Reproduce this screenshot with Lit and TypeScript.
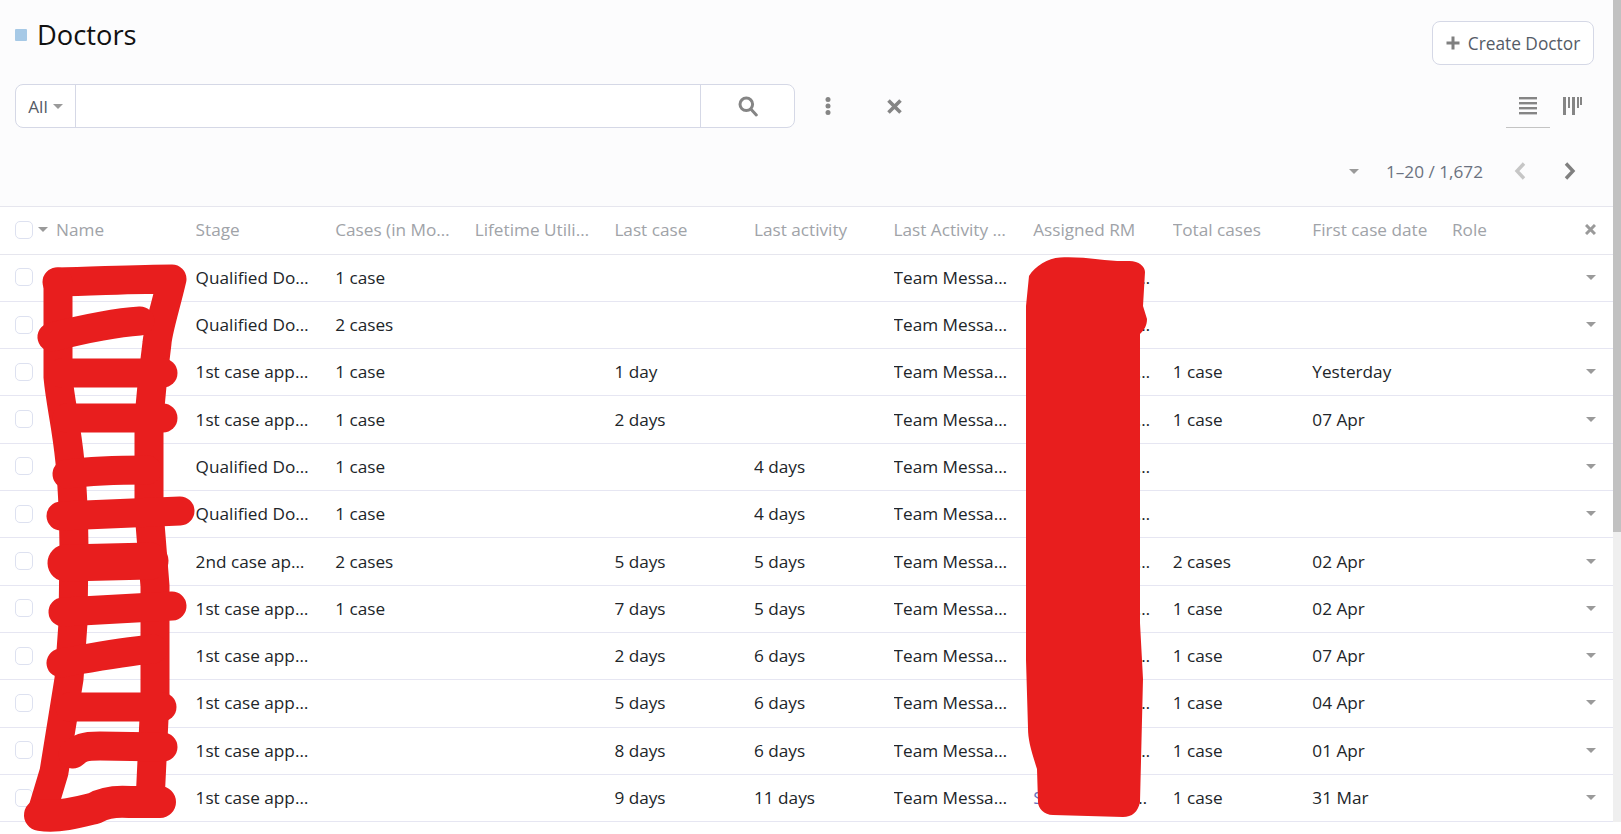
import { LitElement, html, css, svg } from "lit";
import { customElement } from "lit/decorators.js";

type Row = { n: string; s: string; c: string; lc: string; la: string; a: string; t: string; f: string };
const QD = "Qualified Doctor Stage";
const FC = "1st case approved";
const rows: Row[] = [
  { n: "Doctor", s: QD, c: "1 case", lc: "", la: "", a: "Relationship Manager Name", t: "", f: "" },
  { n: "Doctor name hidden by the scribble", s: QD, c: "2 cases", lc: "", la: "", a: "Relationship Manager Name", t: "", f: "" },
  { n: "Doctor", s: FC, c: "1 case", lc: "1 day", la: "", a: "Relationship Manager Name", t: "1 case", f: "Yesterday" },
  { n: "Doctor", s: FC, c: "1 case", lc: "2 days", la: "", a: "Relationship Manager Name", t: "1 case", f: "07 Apr" },
  { n: "Doctor", s: QD, c: "1 case", lc: "", la: "4 days", a: "Relationship Manager Name", t: "", f: "" },
  { n: "Doctor", s: QD, c: "1 case", lc: "", la: "4 days", a: "Relationship Manager Name", t: "", f: "" },
  { n: "Doctor", s: "2nd case approved", c: "2 cases", lc: "5 days", la: "5 days", a: "Relationship Manager Name", t: "2 cases", f: "02 Apr" },
  { n: "Doctor", s: FC, c: "1 case", lc: "7 days", la: "5 days", a: "Relationship Manager Name", t: "1 case", f: "02 Apr" },
  { n: "Doctor", s: FC, c: "", lc: "2 days", la: "6 days", a: "Relationship Manager Name", t: "1 case", f: "07 Apr" },
  { n: "Doctor", s: FC, c: "", lc: "5 days", la: "6 days", a: "Relationship Manager Name", t: "1 case", f: "04 Apr" },
  { n: "Doctor", s: FC, c: "", lc: "8 days", la: "6 days", a: "Relationship Manager Name", t: "1 case", f: "01 Apr" },
  { n: "", s: FC, c: "", lc: "9 days", la: "11 days", a: "Sales Relationship Manager", t: "1 case", f: "31 Mar" },
];
const heads = ["Name", "Stage", "Cases (in Month)", "Lifetime Utilization", "Last case", "Last activity", "Last Activity Type", "Assigned RM", "Total cases", "First case date", "Role"];

const scribble = svg`
  <g fill="none" stroke="#e81e1e" stroke-width="29" stroke-linecap="round" stroke-linejoin="round">
    <path d="M57 282C100 281 140 279 172 279C166 305 158 330 157 343C152 380 149 418 149 418L149 511L155 586L155 698L150 802"/>
    <path d="M58 282L58 377C62 420 73 440 74 548L73 623L69 679L54 772L42 812"/>
    <path d="M52 337C80 330 110 323 140 321"/>
    <path d="M62 373L163 373"/>
    <path d="M67 418L163 418"/>
    <path d="M67 474C90 471 120 470 147 470"/>
    <path d="M61 516L180 511"/>
    <path d="M63 612L172 606"/>
    <path d="M61 663C90 658 120 652 153 649"/>
    <path d="M70 707L162 707"/>
    <path d="M73 754C80 748 83 746 100 746L163 747"/>
    <path d="M66 563L150 561" stroke-width="37"/>
    <path d="M40 815C60 818 83 811 95 808C105 802 117 801 130 802L160 802" stroke-width="32"/>
  </g>
  <path fill="#e81e1e" d="M1029 276C1035 266 1048 258 1060 257.5C1085 256 1110 262 1127 261C1138 260 1145 266 1145 272L1143 306L1147 319C1147 326 1144 330 1140 334L1140 623L1143 679L1140 802C1138 812 1132 817 1123 817L1053 815C1044 815 1038 808 1038 802L1037 769C1031 750 1028 740 1028 728L1026 660L1026 306Z"/>
`;

@customElement("app-root")
export class AppRoot extends LitElement {
  static styles = css`
    :host { display: block; position: relative; width: 1621px; height: 834px; overflow: hidden; background: #fff;
      font-family: "Open Sans", "Noto Sans", sans-serif; font-size: 17.2px; color: #212529; }
    .frame { display: flex; height: 822px; }
    .main { flex: 1; min-width: 0; display: flex; flex-direction: column; }
    .bar { width: 8px; background: #efefef; flex: none; }
    .thumb { height: 532px; background: #c1c1c1; }

    .head { height: 207px; flex: none; box-sizing: border-box; background: #fcfcfd; border-bottom: 1px solid #e6e6ee; padding: 21px 19px 0 15px; display: flex; flex-direction: column; }
    .top { display: flex; justify-content: space-between; align-items: flex-start; height: 63px; }
    .title { display: flex; align-items: center; gap: 10px; font-size: 27.3px; color: #111; line-height: 28px; }
    .sq { width: 12px; height: 12px; background: #a6c9e6; border-radius: 1px; }
    .create { width: 162px; height: 44px; box-sizing: border-box; border: 1px solid #d5d8e6; border-radius: 8px; background: #fff; display: flex; align-items: center; justify-content: center; gap: 8px; font-size: 17.3px; color: #555b66; }
    .tools { display: flex; align-items: flex-start; height: 44px; }
    .search { width: 780px; height: 44px; box-sizing: border-box; border: 1px solid #d5d8e6; border-radius: 8px; background: #fff; display: flex; }
    .all { width: 60px; box-sizing: border-box; border-right: 1px solid #d5d8e6; display: flex; align-items: center; justify-content: center; gap: 5px; color: #555b66; }
    .field { flex: 1; }
    .go { width: 93px; border-left: 1px solid #d5d8e6; display: flex; align-items: center; justify-content: center; }
    .act { display: flex; align-items: center; height: 44px; margin-left: 30px; gap: 56px; }
    .views { margin-left: auto; display: flex; align-items: flex-start; }
    .view { width: 44px; height: 44px; box-sizing: border-box; display: flex; align-items: center; justify-content: center; }
    .view.on { border-bottom: 1px solid #c4c4c4; }
    .pager { display: flex; align-items: center; justify-content: flex-end; margin-top: 21px; height: 44px; color: #6b7280; margin-right: 8px; }
    .pager .txt { margin: 0 21px 0 27px; }
    .pager .gap { width: 32px; display: flex; justify-content: center; }
    .pager .gap + .gap { margin-left: 18px; }

    .caret { width: 0; height: 0; border-left: 5px solid transparent; border-right: 5px solid transparent; border-top: 5px solid #9a9a9a; display: block; }
    .g { display: grid; grid-template-columns: 56px repeat(10, 139.6px) 1fr 45px; }
    .g > div { display: flex; align-items: center; min-width: 0; padding-bottom: 1px; box-sizing: border-box; }
    .hr { height: 47.6px; flex: none; box-sizing: border-box; border-bottom: 1px solid #e6e6ee; color: #a0a3a8; }
    .r { height: 47.3px; flex: none; box-sizing: border-box; border-bottom: 1px solid #e6e6f2; }
    .sel { padding-left: 15px; gap: 5px; }
    .box { width: 18px; height: 18px; box-sizing: border-box; border: 1px solid #dde1f0; border-radius: 5px; background: #fff; flex: none; }
    .t { display: block; white-space: nowrap; overflow: hidden; text-overflow: ellipsis; width: 118px; }
    .link { color: #6272c0; }
    .end { justify-content: center; }
    svg { display: block; }
    .paint { position: absolute; left: 0; top: 0; width: 1621px; height: 834px; pointer-events: none; }
  `;

  render() {
    return html`
      <div class="frame">
        <div class="main">
          <div class="head">
            <div class="top">
              <div class="title"><span class="sq"></span><span>Doctors</span></div>
              <div class="create">
                <svg width="14" height="14" viewBox="0 0 14 14"><path d="M7 0.5V13.5M0.5 7H13.5" stroke="#808080" stroke-width="3"/></svg>
                <span>Create Doctor</span>
              </div>
            </div>
            <div class="tools">
              <div class="search">
                <div class="all"><span>All</span><i class="caret"></i></div>
                <div class="field"></div>
                <div class="go">
                  <svg width="20" height="21" viewBox="0 0 20 21" fill="none" stroke="#858585" stroke-width="3"><circle cx="8.3" cy="8.3" r="6.3"/><path d="M12.8 13L18.3 19" stroke-linecap="round"/></svg>
                </div>
              </div>
              <div class="act">
                <svg width="6" height="18" viewBox="0 0 6 18" fill="#858585"><circle cx="3" cy="2.6" r="2.5"/><circle cx="3" cy="9" r="2.5"/><circle cx="3" cy="15.4" r="2.5"/></svg>
                <svg width="15" height="15" viewBox="0 0 15 15" stroke="#858585" stroke-width="3.6"><path d="M1.5 1.5L13.5 13.5M13.5 1.5L1.5 13.5"/></svg>
              </div>
              <div class="views">
                <div class="view on">
                  <svg width="18" height="18" viewBox="0 0 18 18" fill="#858585"><rect y="0" width="18" height="2.4"/><rect y="5" width="18" height="2.4"/><rect y="10" width="18" height="2.4"/><rect y="15" width="18" height="2.4"/></svg>
                </div>
                <div class="view">
                  <svg width="19" height="18" viewBox="0 0 19 18" fill="#858585"><rect x="0" width="3" height="18"/><rect x="5" width="2" height="11"/><rect x="9" width="3" height="18"/><rect x="14" width="2" height="11"/><rect x="17" width="2" height="8"/></svg>
                </div>
              </div>
            </div>
            <div class="pager">
              <i class="caret"></i>
              <span class="txt">1–20 / 1,672</span>
              <span class="gap"><svg width="12" height="18" viewBox="0 0 12 18" fill="none" stroke="#c6c6c6" stroke-width="3.4"><path d="M10 1.5L3 9L10 16.5"/></svg></span>
              <span class="gap"><svg width="12" height="18" viewBox="0 0 12 18" fill="none" stroke="#808080" stroke-width="3.4"><path d="M2 1.5L9 9L2 16.5"/></svg></span>
            </div>
          </div>
          <div class="g hr">
            <div class="sel"><span class="box"></span><i class="caret"></i></div>
            ${heads.map((h) => html`<div><span class="t">${h}</span></div>`)}
            <div class="end">
              <svg width="11" height="11" viewBox="0 0 11 11" stroke="#9a9a9a" stroke-width="3"><path d="M1 1L10 10M10 1L1 10"/></svg>
            </div>
          </div>
          ${rows.map(
            (r) => html`
              <div class="g r">
                <div class="sel"><span class="box"></span></div>
                <div><span class="t">${r.n}</span></div>
                <div><span class="t">${r.s}</span></div>
                <div><span class="t">${r.c}</span></div>
                <div></div>
                <div><span class="t">${r.lc}</span></div>
                <div><span class="t">${r.la}</span></div>
                <div><span class="t">Team Messages Sent</span></div>
                <div><span class="t"><span class="link">${r.a}</span></span></div>
                <div><span class="t">${r.t}</span></div>
                <div><span class="t">${r.f}</span></div>
                <div></div>
                <div class="end"><i class="caret"></i></div>
              </div>
            `
          )}
        </div>
        <div class="bar"><div class="thumb"></div></div>
      </div>
      <svg class="paint" viewBox="0 0 1621 834">${scribble}</svg>
    `;
  }
}
